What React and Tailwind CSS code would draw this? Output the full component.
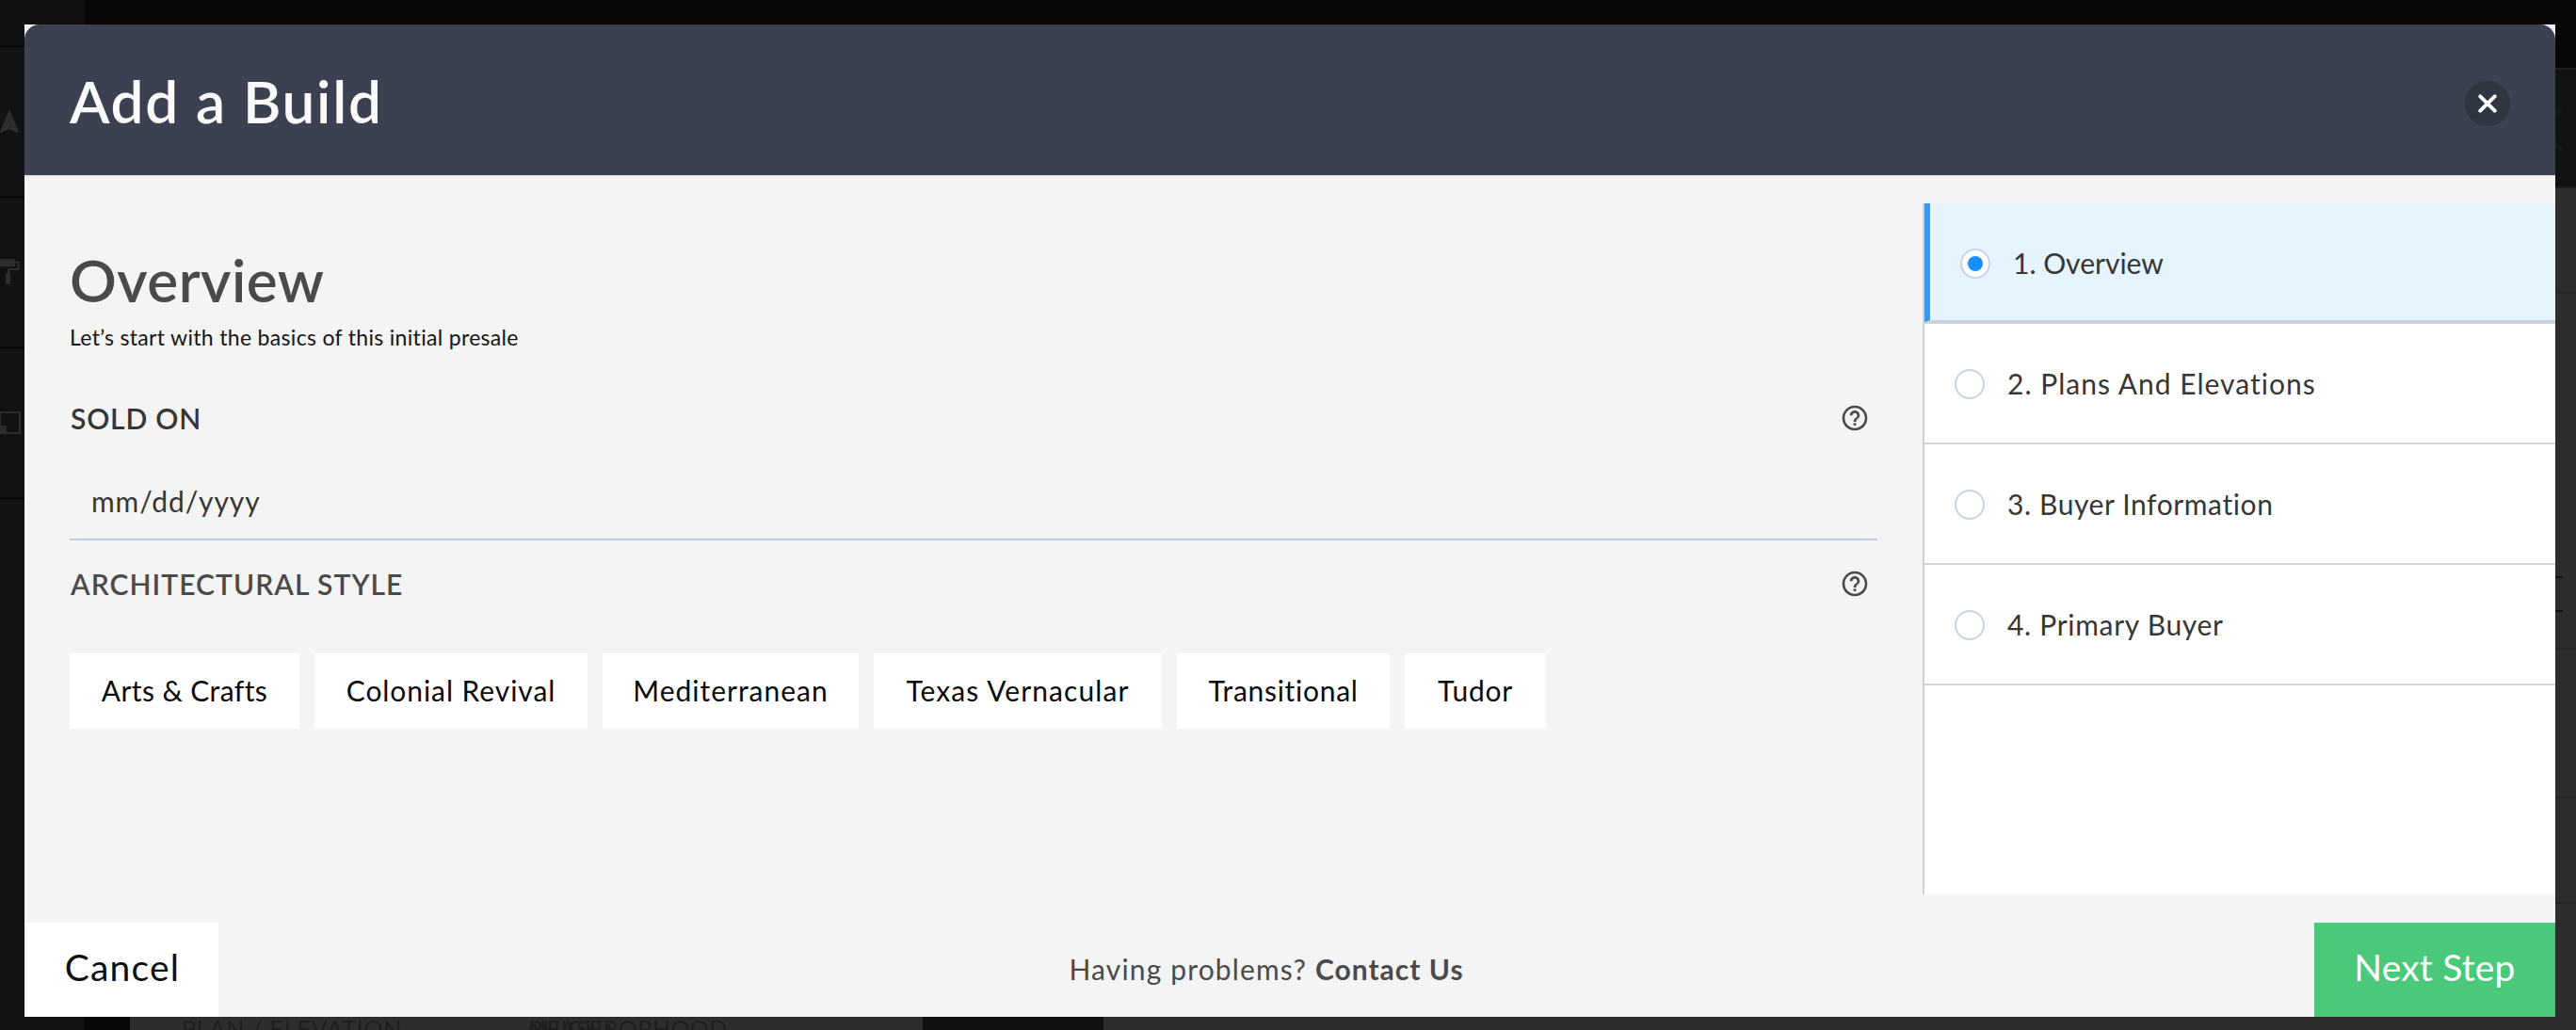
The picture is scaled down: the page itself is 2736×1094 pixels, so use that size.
import { useState } from 'react';
import { MdHelpOutline, MdNavigation } from 'react-icons/md';

const styles = [
  { name: 'Arts & Crafts', className: 'w-[244px] tracking-[0.4px]' },
  { name: 'Colonial Revival', className: 'w-[290px] tracking-[0.93px]' },
  { name: 'Mediterranean', className: 'w-[272px] tracking-[1px]' },
  { name: 'Texas Vernacular', className: 'w-[306px] tracking-[1.1px]' },
  { name: 'Transitional', className: 'w-[226px] tracking-[0.7px]' },
  { name: 'Tudor', className: 'w-[150px] tracking-[0.75px]' },
];

const steps = [
  { label: '1. Overview', className: 'tracking-[0px]' },
  { label: '2. Plans And Elevations', className: 'tracking-[1.02px]' },
  { label: '3. Buyer Information', className: 'tracking-[0.6px]' },
  { label: '4. Primary Buyer', className: 'tracking-[0.7px]' },
];

const Backdrop = () => (
  <div className="absolute inset-0 bg-[#080808] text-[#2d2d2d]" aria-hidden="true">
    {/* Left tool rail */}
    <div className="absolute left-0 top-0 w-[90px] h-full bg-[#111214]">
      <div className="h-[50px] bg-[#0e1012] border-b-2 border-[#070708]" />
      <div className="h-40 border-b-2 border-[#070708]" />
      <div className="h-40 border-b-2 border-[#070708]" />
      <div className="h-40 border-b-2 border-[#070708]" />
      <MdNavigation className="absolute -left-[6px] top-[113px] w-8 h-8" />
      <svg className="absolute left-0 top-[275px] w-[22px] h-[28px]" viewBox="0 0 22 28" fill="none" stroke="currentColor">
        <path d="M0 0h16v8H0z" fill="currentColor" stroke="none" />
        <path d="M16 3.500h3.500v7.500h-10.500v4" strokeWidth="2" />
        <path d="M6 15h5v12H6z" fill="currentColor" stroke="none" />
      </svg>
      <svg className="absolute left-0 top-[437px] w-[22px] h-[24px]" viewBox="0 0 22 24" fill="none" stroke="currentColor">
        <path d="M0 1h21v22H0z" strokeWidth="2" />
        <path d="M0 15h7v8H0z" fill="currentColor" stroke="none" />
      </svg>
    </div>

    {/* Right column behind the dialog */}
    <div className="absolute right-0 top-[72px] bottom-0 w-[200px] bg-[#2d2d2d]">
      <div className="h-[128px] bg-[#111214] border-y-2 border-[#1f1f22]" />
      <div className="h-[112px] border-b-2 border-[#262626]" />
      <div className="h-[378px] border-b-2 border-[#262626]" />
      <div className="h-[158px] border-b-2 border-[#262626]" />
      <div className="h-[112px] border-b-2 border-[#262626]" />
      <div className="absolute right-[14px] top-[540px] w-10 h-[38px] border-y-2 border-[#111111]" />
      <svg className="absolute right-[14px] top-[40px] w-[24px] h-[50px]" viewBox="0 0 24 50" fill="none" stroke="#141a1b" strokeWidth="5">
        <path d="M22 2L2 25l20 23" />
      </svg>
    </div>

    {/* Table header strip */}
    <div className="absolute left-[138px] bottom-0 w-[842px] h-4 bg-[#2d2d2d] overflow-hidden text-[25px] leading-[32px] text-[#1d1e1f]">
      <span className="absolute left-[55px] -top-[2px] tracking-[0.8px] whitespace-nowrap">PLAN / ELEVATION</span>
      <span className="absolute left-[423px] -top-[2px]">PHASE/</span>
      <span className="absolute left-[423px] -top-[2px] tracking-[0.3px]">NEIGHBORHOOD</span>
    </div>
    <div className="absolute left-[980px] bottom-0 w-[192px] h-4 bg-[#0e1012]" />
    <div className="absolute left-[1172px] right-0 bottom-0 h-4 bg-[#2d2d2d]" />
  </div>
);

const Radio = ({ checked }) => (
  <span className="w-8 h-8 shrink-0 rounded-full border-2 border-[#c9d3e6] bg-white flex items-center justify-center">
    {checked && <span className="w-4 h-4 rounded-full bg-[#1890ff]" />}
  </span>
);

export default function App() {
  const [active, setActive] = useState(0);

  return (
    <div className="relative w-full h-[1094px] overflow-hidden font-['Lato','Open_Sans',sans-serif] [font-variant-ligatures:none]">
      <Backdrop />

      <div className="relative h-full pt-[26px] pb-[14px] pl-[26px] pr-[22px]">
        <div className="h-full flex flex-col bg-[#f4f4f4]">
          {/* Header */}
          <div className="h-[160px] shrink-0 flex items-center justify-between pt-2 pl-12 pr-12 bg-[#3b4151] rounded-t-2xl shadow-[0_1px_3px_rgba(60,40,90,0.15)]">
            <h1 className="pb-[6px] text-[62px] leading-[80px] font-semibold tracking-[1.7px] text-[#fafafa]">Add a Build</h1>
            <button className="w-12 h-12 rounded-full bg-[#2f3641] flex items-center justify-center">
              <svg className="w-5 h-5" viewBox="0 0 20 20" fill="none" stroke="white" strokeWidth="4" strokeLinecap="round">
                <path d="M2.300 2.300l15.400 15.400M17.700 2.300L2.300 17.700" />
              </svg>
            </button>
          </div>

          <div className="flex-1 flex min-h-0">
            {/* Form */}
            <div className="flex-1 pt-[71px] px-12">
              <h2 className="text-[62px] leading-[80px] font-semibold tracking-[0.5px] text-[#4a4a4a]">Overview</h2>
              <p className="mt-[5px] text-[23px] leading-8 tracking-[0.32px] text-[#141414]">Let’s start with the basics of this initial presale</p>

              <div className="mt-[50px] pr-2 flex items-center justify-between">
                <label className="pl-px text-[30px] leading-10 font-semibold tracking-[0.8px] text-[#363636]">SOLD ON</label>
                <MdHelpOutline className="w-8 h-8 text-[#4a4a4a]" />
              </div>
              <div className="mt-5 h-[90px] pt-7 pl-[23px] border-b-2 border-[#c0cce0]">
                <span className="block text-[30px] leading-10 tracking-[0.9px] text-[#363636]">mm/dd/yyyy</span>
              </div>

              <div className="mt-[26px] pr-2 flex items-center justify-between">
                <label className="pl-px text-[30px] leading-10 font-semibold tracking-[1.05px] text-[#4a4a4a]">ARCHITECTURAL STYLE</label>
                <MdHelpOutline className="w-8 h-8 text-[#4a4a4a]" />
              </div>
              <div className="mt-[54px] flex gap-4">
                {styles.map((s) => (
                  <button key={s.name} className={`h-20 pb-[2px] flex items-center justify-center bg-white text-[30px] whitespace-nowrap text-[#0a0a0a] ${s.className}`}>
                    {s.name}
                  </button>
                ))}
              </div>
            </div>

            {/* Steps */}
            <div className="w-[672px] my-[30px] border-l-2 border-[#d2d2d2] bg-white">
              {steps.map((step, i) => (
                <div key={step.label} className="h-32 border-b-2 border-[#d2d2d2]">
                  <button onClick={() => setActive(i)}
                    className={`w-full h-full flex items-center gap-6 pl-8 text-[30px] text-[#363636] ${i === active ? 'pt-1 border-l-[6px] border-b-2 border-l-[#3899ec] border-b-[#c5cfdf] bg-[#e6f4fe]' : 'pt-[2px]'}`}>
                    <Radio checked={i === active} />
                    <span className={`pb-[2px] ${step.className}`}>{step.label}</span>
                  </button>
                </div>
              ))}
            </div>
          </div>

          {/* Footer */}
          <div className="h-[100px] shrink-0 flex items-stretch justify-between text-[39px]">
            <button className="w-[206px] pb-[5px] pl-[2px] bg-white text-[#0f0f0f] tracking-[1.2px]">Cancel</button>
            <p className="self-center pb-[3px] text-[30px] leading-10 tracking-[1.15px] text-[#4a4a4a]">
              Having problems? <a href="#contact" className="font-bold tracking-[1px]">Contact Us</a>
            </p>
            <button className="w-[256px] pb-[5px] bg-[#4bc97a] text-white tracking-[0.2px]">Next Step</button>
          </div>
        </div>
      </div>
    </div>
  );
}
